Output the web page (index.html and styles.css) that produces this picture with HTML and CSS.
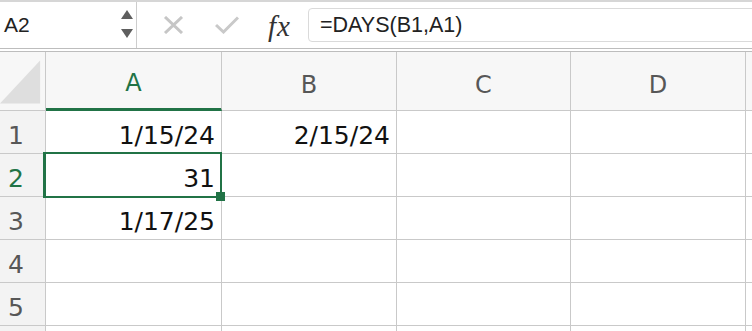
FILE: index.html
```html
<!DOCTYPE html>
<html lang="en">
<head>
  <meta charset="UTF-8">
  <title>Sheet</title>
  <link rel="stylesheet" href="styles.css">
</head>
<body>
  <div class="toolbar">
    <div class="namebox">
      <span class="ref">A2</span>
      <span class="spin">
        <svg width="12" height="9" viewBox="0 0 12 9"><path d="M6 0 L12 9 L0 9 Z" fill="#5f5f5f"/></svg>
        <svg width="12" height="9" viewBox="0 0 12 9"><path d="M0 0 L12 0 L6 9 Z" fill="#5f5f5f"/></svg>
      </span>
    </div>
    <div class="actions">
      <svg class="cancel" width="21" height="18" viewBox="0 0 21 18"><path d="M2 1 L19 17 M19 1 L2 17" stroke="#c6c6c6" stroke-width="3" fill="none"/></svg>
      <svg class="enter" width="24" height="18" viewBox="0 0 24 18"><path d="M1 9 L8.5 16 L23 1.5" stroke="#c9c9c9" stroke-width="3" fill="none"/></svg>
      <span class="fx">fx</span>
    </div>
    <div class="formula">=DAYS(B1,A1)</div>
  </div>

  <div class="sheet">
    <div class="corner">
      <svg width="46" height="58" viewBox="0 0 46 58"><path d="M41 8 L41 52 L0 52 Z" fill="#dedede"/></svg>
    </div>
    <div class="colhead active">A</div>
    <div class="colhead">B</div>
    <div class="colhead">C</div>
    <div class="colhead">D</div>
    <div class="colhead"></div>

    <div class="rowhead">1</div>
    <div class="cell">1/15/24</div>
    <div class="cell">2/15/24</div>
    <div class="cell"></div>
    <div class="cell"></div>
    <div class="cell"></div>

    <div class="rowhead active">2</div>
    <div class="cell selected">31</div>
    <div class="cell"></div>
    <div class="cell"></div>
    <div class="cell"></div>
    <div class="cell"></div>

    <div class="rowhead">3</div>
    <div class="cell">1/17/25</div>
    <div class="cell"></div>
    <div class="cell"></div>
    <div class="cell"></div>
    <div class="cell"></div>

    <div class="rowhead">4</div>
    <div class="cell"></div>
    <div class="cell"></div>
    <div class="cell"></div>
    <div class="cell"></div>
    <div class="cell"></div>

    <div class="rowhead">5</div>
    <div class="cell"></div>
    <div class="cell"></div>
    <div class="cell"></div>
    <div class="cell"></div>
    <div class="cell"></div>

    <div class="rowhead"></div>
    <div class="cell"></div>
    <div class="cell"></div>
    <div class="cell"></div>
    <div class="cell"></div>
    <div class="cell"></div>
  </div>
</body>
</html>
```

FILE: styles.css
```css
:root {
  --green: #217346;
  --grid-line: #c9c9c9;
  --head-bg: #f7f7f7;
  --head-text: #575757;
}

body {
  margin: 0;
  font-family: 'Liberation Sans', Arial, sans-serif;
  background: #fff;
  overflow: hidden;
}

.toolbar {
  display: flex;
  height: 52px;
  box-sizing: border-box;
  border-top: 2px solid #d6d6d6;
  border-bottom: 4px double #bdbdbd;
}

.namebox {
  width: 137px;
  box-sizing: border-box;
  border-right: 1px solid #cdcdcd;
  display: flex;
  align-items: center;
  justify-content: space-between;
  padding: 0 3px 0 4px;
}

.ref {
  font-size: 21px;
  color: #222;
}

.spin {
  display: flex;
  flex-direction: column;
  gap: 10px;
  margin-top: -2px;
}

.spin svg {
  display: block;
}

.actions {
  width: 171px;
  display: flex;
  align-items: center;
}

.cancel {
  margin-left: 26px;
}

.enter {
  margin-left: 31px;
}

.fx {
  margin-left: 29px;
  font-family: 'Liberation Serif', serif;
  font-style: italic;
  font-size: 29px;
  letter-spacing: 1px;
  color: #333;
  margin-top: 2px;
}

.formula {
  flex: 1;
  margin: 6px -10px 0 0;
  height: 34px;
  box-sizing: border-box;
  border: 1px solid #dadada;
  border-radius: 4px 0 0 4px;
  padding-left: 11px;
  display: flex;
  align-items: center;
  font-size: 21.5px;
  color: #222;
}

.sheet {
  display: grid;
  grid-template-columns: 46px 176px 175px 174px 175px 1fr;
  grid-template-rows: 59px repeat(5, 43px) 1fr;
  height: 279px;
  font-family: 'DejaVu Sans', sans-serif;
}

.sheet > div {
  box-sizing: border-box;
  border-right: 1px solid var(--grid-line);
  border-bottom: 1px solid var(--grid-line);
  display: flex;
  line-height: 1;
}

.corner {
  background: var(--head-bg);
}

.corner svg {
  display: block;
}

.colhead {
  background: var(--head-bg);
  color: var(--head-text);
  font-size: 24px;
  justify-content: center;
  align-items: center;
  padding-top: 8px;
}

.colhead.active {
  color: var(--green);
  border-bottom: 3px solid var(--green);
  padding-top: 6px;
}

.rowhead {
  background: #f3f3f3;
  color: var(--head-text);
  font-size: 25px;
  align-items: flex-end;
  padding: 0 0 5px 8px;
}

.rowhead.active {
  color: var(--green);
}

.cell {
  font-size: 25px;
  color: #111;
  justify-content: flex-end;
  align-items: flex-end;
  padding: 0 6px 5px 0;
}

.cell.selected {
  position: relative;
}

.cell.selected::before {
  content: '';
  position: absolute;
  left: -3px;
  top: -2px;
  right: -1px;
  bottom: -2px;
  border: 2px solid var(--green);
  border-left-width: 3px;
}

.cell.selected::after {
  content: '';
  position: absolute;
  right: -4px;
  bottom: -5px;
  width: 9px;
  height: 9px;
  background: var(--green);
}
```
